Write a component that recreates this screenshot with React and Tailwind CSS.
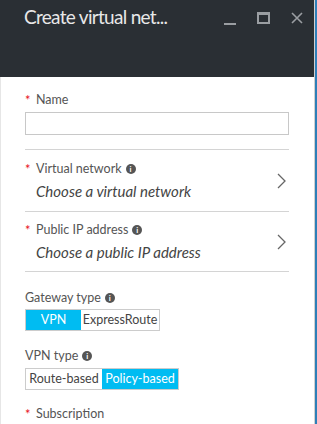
const font = { fontFamily: 'Lato, "Open Sans", sans-serif' }

function Info() {
  return (
    <span className="ml-[4px] inline-flex h-[10px] w-[10px] items-center justify-center rounded-full bg-[#555] text-[8px] font-bold leading-none text-white">
      i
    </span>
  )
}

function Label({ required, children, info }) {
  return (
    <div className="flex h-[14px] items-center text-[12.5px] leading-none text-[#555]">
      {required ? <span className="mr-[4px] w-[7px] text-[13px] text-[#e81123]">*</span> : null}
      <span>{children}</span>
      {info ? <Info /> : null}
    </div>
  )
}

function Chevron() {
  return (
    <svg width="9" height="16" viewBox="0 0 9 16" className="mr-[3px]">
      <path d="M1 1 L8 8 L1 15" fill="none" stroke="#666" strokeWidth="1.3" />
    </svg>
  )
}

function Picker({ label, value, pt, gap, pb }) {
  return (
    <div className="flex items-center border-b border-[#d4d4d4]" style={{ paddingTop: pt, paddingBottom: pb }}>
      <div className="flex-1">
        <Label required info>
          {label}
        </Label>
        <div className="h-[15px] pl-[11px] text-[15px] italic leading-none text-[#444]" style={{ marginTop: gap }}>
          {value}
        </div>
      </div>
      <Chevron />
    </div>
  )
}

function Toggle({ options, active }) {
  return (
    <div className="flex w-fit border border-[#ccc]">
      {options.map((o) => (
        <div
          key={o.label}
          className={
            o.label === active
              ? 'flex h-[20px] items-center justify-center whitespace-nowrap bg-[#00bcf2] text-[12.5px] text-white'
              : 'flex h-[20px] items-center justify-center whitespace-nowrap bg-white text-[12.5px] text-[#444]'
          }
          style={{ width: o.w }}
        >
          {o.label}
        </div>
      ))}
    </div>
  )
}

export default function App() {
  return (
    <div className="flex h-[424px] w-[317px] overflow-hidden bg-white" style={font}>
      <div className="flex flex-1 flex-col border-r border-[#d0d0d0]">
        <div className="flex h-[77px] shrink-0 items-start bg-[#2a2f34] pl-[24px] pt-[3px]">
          <div className="flex-1 text-[19px] tracking-[-0.7px] text-[#e8e8e8]">Create virtual net...</div>
          <div className="mt-[9px] flex items-start gap-[21px] pr-[11px]">
            <div className="mt-[11px] h-[2px] w-[12px] bg-[#9a9ea2]" />
            <div className="h-[12px] w-[13px] border-2 border-t-[3px] border-[#9a9ea2]" />
            <svg width="12" height="12" viewBox="0 0 12 12">
              <path d="M1 1 L11 11 M11 1 L1 11" stroke="#9a9ea2" strokeWidth="1.6" />
            </svg>
          </div>
        </div>
        <div className="flex-1 border-l border-[#e6e6e6] pl-[24px] pr-[25px] pt-[16px]">
          <Label required>Name</Label>
          <div className="mt-[5px] h-[23px] border border-[#c8c8c8]" />
          <div className="mt-[14px] border-t border-[#d4d4d4]" />
          <Picker label="Virtual network" value="Choose a virtual network" pt={12} gap={8} pb={12} />
          <Picker label="Public IP address" value="Choose a public IP address" pt={11} gap={8} pb={11} />
          <div className="pt-[19px]">
            <Label info>Gateway type</Label>
            <div className="mt-[4px]">
              <Toggle
                options={[
                  { label: 'VPN', w: 55 },
                  { label: 'ExpressRoute', w: 78 },
                ]}
                active="VPN"
              />
            </div>
          </div>
          <div className="pt-[18px]">
            <Label info>VPN type</Label>
            <div className="mt-[5px]">
              <Toggle
                options={[
                  { label: 'Route-based', w: 76 },
                  { label: 'Policy-based', w: 76 },
                ]}
                active="Policy-based"
              />
            </div>
          </div>
          <div className="pt-[17px]">
            <Label required>Subscription</Label>
            <div className="mt-[5px] h-[23px] border border-[#c8c8c8]" />
          </div>
        </div>
      </div>
      <div className="w-[2px] bg-[#2d7fb8]" />
    </div>
  )
}
